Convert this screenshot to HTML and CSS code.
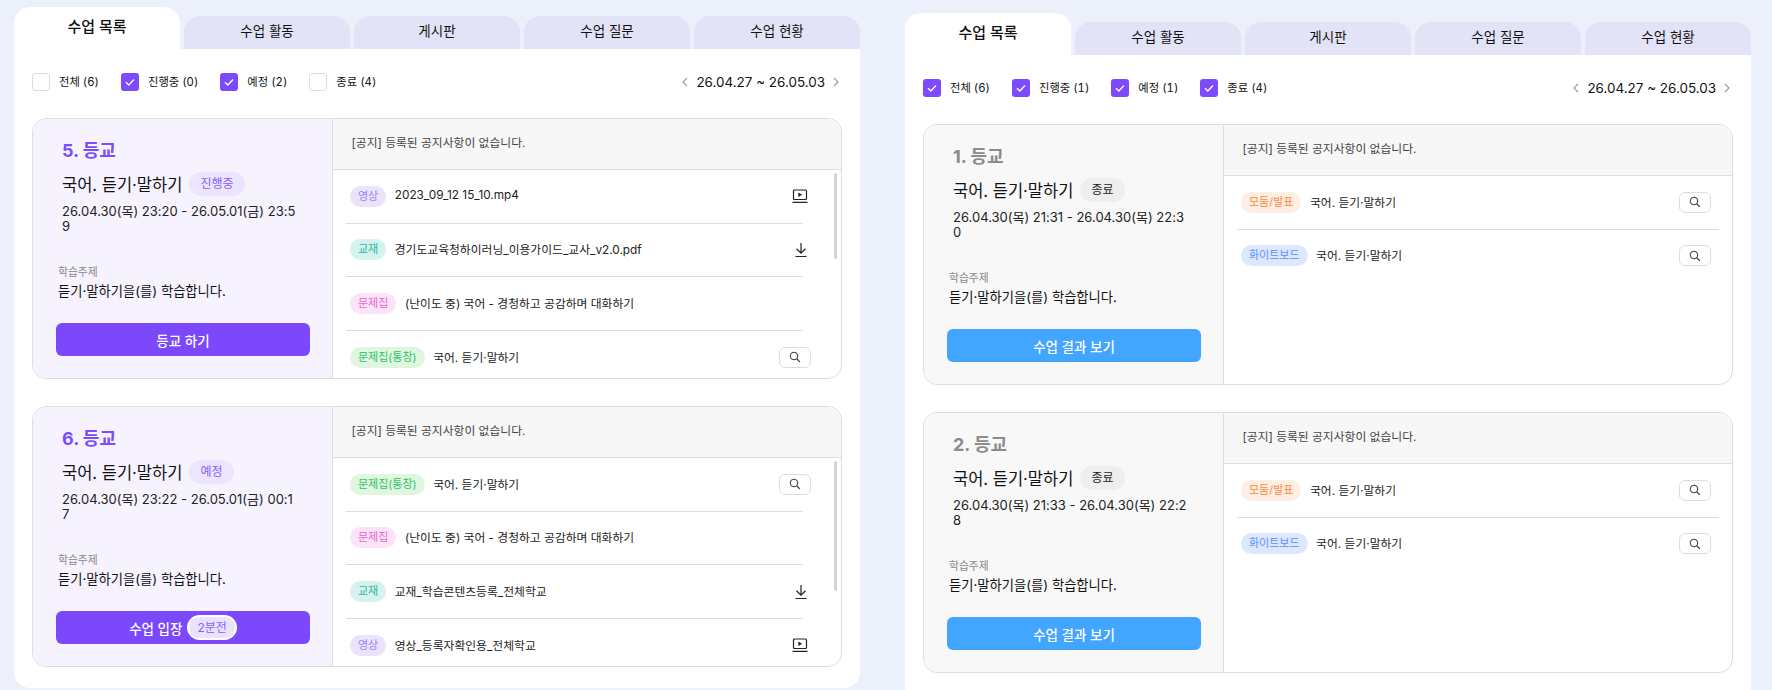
FILE: index.html
```html
<!DOCTYPE html>
<html lang="ko">
<head>
<meta charset="utf-8">
<title>수업 목록</title>
<link rel="stylesheet" href="styles.css">
</head>
<body>
<svg class="sprite" width="0" height="0">
  <symbol id="i-check" viewBox="0 0 18 18"><path d="M5 9.2l2.8 2.7L13 6.6" fill="none" stroke="#fff" stroke-width="1.4"/></symbol>
  <symbol id="i-video" viewBox="0 0 16 15"><rect x="1.5" y="1" width="13" height="9.5" rx="1" fill="none" stroke="#222" stroke-width="1.2"/><path d="M6.3 3.4v4.6L10.2 5.7z" fill="#222"/><path d="M.5 13.3h15" stroke="#222" stroke-width="1.3"/></symbol>
  <symbol id="i-down" viewBox="0 0 14 16"><path d="M7 1v10M2.5 6.8L7 11.2l4.5-4.4M1.5 14.5h11" fill="none" stroke="#222" stroke-width="1.2"/></symbol>
  <symbol id="i-search" viewBox="0 0 12 12"><circle cx="5" cy="5" r="3.8" fill="none" stroke="#333" stroke-width="1"/><path d="M7.8 7.8l3 3" stroke="#333" stroke-width="1.2"/></symbol>
  <symbol id="i-prev" viewBox="0 0 6 10"><path d="M5 1L1 5l4 4" fill="none" stroke="#999" stroke-width="1.1"/></symbol>
  <symbol id="i-next" viewBox="0 0 6 10"><path d="M1 1l4 4-4 4" fill="none" stroke="#999" stroke-width="1.1"/></symbol>
</svg>
<div class="page">

<section class="panel panel-left">
  <nav class="tabs">
    <div class="tab active">수업 목록</div><div class="tab">수업 활동</div><div class="tab">게시판</div><div class="tab">수업 질문</div><div class="tab">수업 현황</div>
  </nav>
  <div class="body">
    <div class="toolbar">
      <div class="filters">
        <label class="filter"><span class="cb"></span>전체 (6)</label>
        <label class="filter"><span class="cb on"><svg><use href="#i-check"/></svg></span>진행중 (0)</label>
        <label class="filter"><span class="cb on"><svg><use href="#i-check"/></svg></span>예정 (2)</label>
        <label class="filter"><span class="cb"></span>종료 (4)</label>
      </div>
      <div class="range"><svg class="chev"><use href="#i-prev"/></svg><span>26.04.27 ~ 26.05.03</span><svg class="chev"><use href="#i-next"/></svg></div>
    </div>

    <article class="card live">
      <div class="info">
        <h3 class="period">5. 등교</h3>
        <div class="subject"><span>국어. 듣기·말하기</span><span class="state s-live">진행중</span></div>
        <p class="time">26.04.30(목) 23:20 - 26.05.01(금) 23:59</p>
        <div class="topic-label">학습주제</div>
        <p class="topic">듣기·말하기을(를) 학습합니다.</p>
        <button class="action purple">등교 하기</button>
      </div>
      <div class="detail">
        <div class="notice">[공지] 등록된 공지사항이 없습니다.</div>
        <div class="thumb thumb-short"></div>
        <ul class="list">
          <li class="row"><span class="tag t-video">영상</span><span class="name">2023_09_12 15_10.mp4</span><svg class="ic ic-video"><use href="#i-video"/></svg></li>
          <li class="row"><span class="tag t-book">교재</span><span class="name">경기도교육청하이러닝_이용가이드_교사_v2.0.pdf</span><svg class="ic ic-down"><use href="#i-down"/></svg></li>
          <li class="row"><span class="tag t-quiz">문제집</span><span class="name">(난이도 중) 국어 - 경청하고 공감하며 대화하기</span></li>
          <li class="row"><span class="tag t-live">문제집(통창)</span><span class="name">국어. 듣기·말하기</span><span class="find"><svg><use href="#i-search"/></svg></span></li>
        </ul>
      </div>
    </article>

    <article class="card live">
      <div class="info">
        <h3 class="period">6. 등교</h3>
        <div class="subject"><span>국어. 듣기·말하기</span><span class="state s-soon">예정</span></div>
        <p class="time">26.04.30(목) 23:22 - 26.05.01(금) 00:17</p>
        <div class="topic-label">학습주제</div>
        <p class="topic">듣기·말하기을(를) 학습합니다.</p>
        <button class="action purple">수업 입장<span class="pill">2분전</span></button>
      </div>
      <div class="detail">
        <div class="notice">[공지] 등록된 공지사항이 없습니다.</div>
        <div class="thumb thumb-long"></div>
        <ul class="list">
          <li class="row"><span class="tag t-live">문제집(통창)</span><span class="name">국어. 듣기·말하기</span><span class="find"><svg><use href="#i-search"/></svg></span></li>
          <li class="row"><span class="tag t-quiz">문제집</span><span class="name">(난이도 중) 국어 - 경청하고 공감하며 대화하기</span></li>
          <li class="row"><span class="tag t-book">교재</span><span class="name">교재_학습콘텐츠등록_전체학교</span><svg class="ic ic-down"><use href="#i-down"/></svg></li>
          <li class="row"><span class="tag t-video">영상</span><span class="name">영상_등록자확인용_전체학교</span><svg class="ic ic-video"><use href="#i-video"/></svg></li>
        </ul>
      </div>
    </article>
  </div>
</section>

<section class="panel panel-right">
  <nav class="tabs">
    <div class="tab active">수업 목록</div><div class="tab">수업 활동</div><div class="tab">게시판</div><div class="tab">수업 질문</div><div class="tab">수업 현황</div>
  </nav>
  <div class="body">
    <div class="toolbar">
      <div class="filters">
        <label class="filter"><span class="cb on"><svg><use href="#i-check"/></svg></span>전체 (6)</label>
        <label class="filter"><span class="cb on"><svg><use href="#i-check"/></svg></span>진행중 (1)</label>
        <label class="filter"><span class="cb on"><svg><use href="#i-check"/></svg></span>예정 (1)</label>
        <label class="filter"><span class="cb on"><svg><use href="#i-check"/></svg></span>종료 (4)</label>
      </div>
      <div class="range"><svg class="chev"><use href="#i-prev"/></svg><span>26.04.27 ~ 26.05.03</span><svg class="chev"><use href="#i-next"/></svg></div>
    </div>

    <article class="card done">
      <div class="info">
        <h3 class="period">1. 등교</h3>
        <div class="subject"><span>국어. 듣기·말하기</span><span class="state s-done">종료</span></div>
        <p class="time">26.04.30(목) 21:31 - 26.04.30(목) 22:30</p>
        <div class="topic-label">학습주제</div>
        <p class="topic">듣기·말하기을(를) 학습합니다.</p>
        <button class="action blue">수업 결과 보기</button>
      </div>
      <div class="detail">
        <div class="notice">[공지] 등록된 공지사항이 없습니다.</div>
        <ul class="list wide">
          <li class="row"><span class="tag t-group">모둠/발표</span><span class="name">국어. 듣기·말하기</span><span class="find"><svg><use href="#i-search"/></svg></span></li>
          <li class="row"><span class="tag t-board">화이트보드</span><span class="name">국어. 듣기·말하기</span><span class="find"><svg><use href="#i-search"/></svg></span></li>
        </ul>
      </div>
    </article>

    <article class="card done">
      <div class="info">
        <h3 class="period">2. 등교</h3>
        <div class="subject"><span>국어. 듣기·말하기</span><span class="state s-done">종료</span></div>
        <p class="time">26.04.30(목) 21:33 - 26.04.30(목) 22:28</p>
        <div class="topic-label">학습주제</div>
        <p class="topic">듣기·말하기을(를) 학습합니다.</p>
        <button class="action blue">수업 결과 보기</button>
      </div>
      <div class="detail">
        <div class="notice">[공지] 등록된 공지사항이 없습니다.</div>
        <ul class="list wide">
          <li class="row"><span class="tag t-group">모둠/발표</span><span class="name">국어. 듣기·말하기</span><span class="find"><svg><use href="#i-search"/></svg></span></li>
          <li class="row"><span class="tag t-board">화이트보드</span><span class="name">국어. 듣기·말하기</span><span class="find"><svg><use href="#i-search"/></svg></span></li>
        </ul>
      </div>
    </article>
  </div>
</section>

</div>
</body>
</html>
```

FILE: styles.css
```css
* { box-sizing: border-box; }
html, body { margin: 0; padding: 0; height: 690px; overflow: hidden; }
body {
  background: #ecf0fb;
  color: #111;
  font-family: Inter, "Noto Sans CJK KR", "Noto Sans", sans-serif;
}
.sprite { position: absolute; }
.page { display: flex; gap: 45px; padding-left: 14px; align-items: flex-start; }
.panel { width: 846px; flex: none; }
.panel-left { margin-top: 7px; }
.panel-right { margin-top: 13px; }

.tabs { display: flex; gap: 4px; align-items: flex-end; height: 42px; }
.tab {
  width: 166px; height: 33px;
  background: #e2e3f7;
  border-radius: 16px 16px 0 0;
  font-size: 13.5px; line-height: 30px;
  text-align: center;
}
.tab.active { height: 42px; background: #fff; line-height: 40px; font-size: 15px; font-weight: 500; }

.body { background: #fff; padding: 24px 18px 0; border-radius: 0 0 16px 16px; height: 639px; }
.panel-right .body { height: 660px; }

.toolbar { display: flex; justify-content: space-between; align-items: center; height: 18px; margin-bottom: 27px; }
.filters { display: flex; gap: 22px; }
.filter { display: flex; align-items: center; gap: 9px; font-size: 11.3px; line-height: 18px; font-variant-numeric: tabular-nums; }
.cb { width: 18px; height: 18px; border: 1px solid #ddd; border-radius: 3px; background: #fff; display: block; }
.cb.on { background: #7c4aff; border: 0; }
.cb svg { width: 18px; height: 18px; display: block; }
.range { display: flex; align-items: center; gap: 8px; font-size: 13.45px; padding-right: 3px; }
.chev { width: 6px; height: 10px; }

.card {
  display: flex; height: 261px; margin-bottom: 27px;
  border: 1px solid #ddd; border-radius: 14px; overflow: hidden;
  background: #fff;
}
.info { width: 300px; flex: none; padding: 20px 22px 0 23px; border-right: 1px solid #ddd; }
.live .info { background: #f6f3ff; }
.done .info { background: #f8f8f8; }
.period { margin: 0 0 9px 6px; font-size: 18px; line-height: 24px; font-weight: 700; }
.live .period { color: #7c4dff; }
.done .period { color: #8c8c8c; }
.subject { display: flex; align-items: center; gap: 7px; height: 24px; margin-left: 6px; font-size: 16.5px; }
.state { height: 24px; padding: 0 11px; border-radius: 12px; font-size: 12px; line-height: 23px; }
.s-live, .s-soon { background: #ebe5ff; color: #8a5fff; }
.s-done { background: #eeeeee; color: #222; }
.time { margin: 8px 0 0 6px; width: 236px; font-size: 13px; line-height: 15px; word-break: break-all; color: #222; }
.topic-label { margin: 31px 0 1px 2px; font-size: 10.8px; line-height: 16px; color: #888; }
.topic { margin: 0 0 23px 2px; font-size: 13.3px; line-height: 18px; color: #111; }
.action {
  display: flex; align-items: center; justify-content: center; gap: 5px;
  width: 254px; height: 33px; border: 0; border-radius: 6px;
  color: #fff; font: inherit; font-size: 13.5px; font-weight: 500;
}
.purple { background: #7b48fc; }
.blue { background: #42a5ff; }
.pill {
  height: 25px; padding: 0 8px; border-radius: 13px;
  border: 2px solid #fff; background: #e9e3ff; color: #8a5fff;
  font-size: 12px; line-height: 21px; font-weight: 400;
}

.detail { flex: 1; min-width: 0; position: relative; }
.notice {
  height: 51px; padding-left: 18.5px; background: #f7f7f7; border-bottom: 1px solid #ddd;
  font-size: 11.8px; line-height: 48px; color: #444;
}
.thumb { position: absolute; right: 4px; width: 3px; border-radius: 2px; background: #d4d4d4; }
.thumb-short { top: 54px; height: 86px; }
.thumb-long { top: 54px; height: 130px; }

.list { list-style: none; margin: 0; padding: 0 38px 0 13px; }
.list.wide { padding-right: 13px; }
.row {
  display: flex; align-items: center;
  height: 53.67px; padding: 0 4px 0 4px;
  border-bottom: 1px solid #ddd;
  font-size: 11.8px; color: #222;
}
.row:last-child { border-bottom-color: transparent; }
.tag { height: 21px; padding: 0 8px; border-radius: 11px; font-size: 11px; line-height: 20px; flex: none; }
.t-video { background: #e9e4fb; color: #a27cf5; }
.t-book { background: #d5f3ee; color: #2bb8a2; }
.t-quiz { background: #fce4f8; color: #e866d4; }
.t-live { background: #dff7df; color: #2fc26c; }
.t-group { background: #ffeee3; color: #ff8a3d; }
.t-board { background: #dde8ff; color: #5f8fff; }
.name { margin-left: 8.5px; padding-bottom: 2px; flex: 1; min-width: 0; white-space: nowrap; }
.ic { flex: none; }
.ic-video { width: 16px; height: 15px; margin-right: -9px; }
.ic-down { width: 14px; height: 16px; margin-right: -9px; }
.find {
  width: 32px; height: 21px; flex: none; margin-right: -12px;
  border: 1px solid #ddd; border-radius: 6px;
  display: flex; align-items: center; justify-content: center;
}
.list.wide .find { margin-right: 4px; }
.find svg { width: 12px; height: 12px; }
```
